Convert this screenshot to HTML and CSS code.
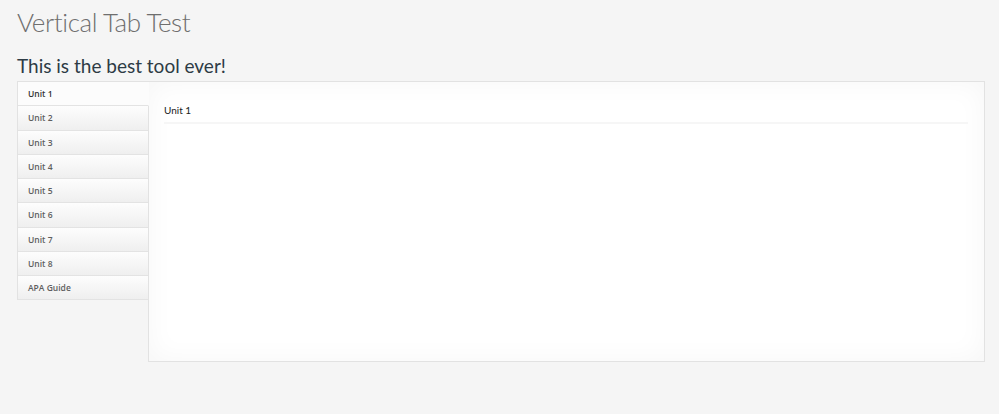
FILE: index.html
```html
<!DOCTYPE html>
<html>
<head>
    <meta charset="utf-8">
    <title>Vertical Tab Test</title>
    <link rel="stylesheet" href="styles.css">
</head>
<body>
    <h1 class="page-title">Vertical Tab Test</h1>
    <h2 class="subtitle">This is the best tool ever!</h2>
    <div class="vtabs">
        <ul class="tab-list">
            <li class="tab active">Unit 1</li>
            <li class="tab">Unit 2</li>
            <li class="tab">Unit 3</li>
            <li class="tab">Unit 4</li>
            <li class="tab">Unit 5</li>
            <li class="tab">Unit 6</li>
            <li class="tab">Unit 7</li>
            <li class="tab">Unit 8</li>
            <li class="tab">APA Guide</li>
        </ul>
        <div class="tab-panel">
            <div class="panel-heading">Unit 1</div>
        </div>
    </div>
</body>
</html>
```

FILE: styles.css
```css
body {
    margin: 0;
    padding: 8px 14px 0 17px;
    background: #f5f5f5;
    font-family: Lato, "Open Sans", sans-serif;
    color: #333;
}
.page-title {
    margin: 0;
    font-size: 26px;
    font-weight: 300;
    letter-spacing: -0.4px;
    color: #6e6e6e;
    line-height: 28px;
}
.subtitle {
    margin: 18px 0 0 0;
    font-size: 19px;
    font-weight: 400;
    line-height: 24px;
    color: #2d3b45;
}
.vtabs {
    display: flex;
    margin-top: 3px;
    height: 281px;
}
.tab-list {
    list-style: none;
    margin: 0;
    padding: 0;
    width: 130px;
    flex: none;
    border-top: 1px solid #e2e2e2;
    border-left: 1px solid #e2e2e2;
    align-self: flex-start;
}
.tab {
    height: 23.25px;
    line-height: 23px;
    padding-left: 10px;
    font-family: "Open Sans", sans-serif;
    font-size: 8.5px;
    font-weight: 600;
    color: #5e5e5e;
    background: linear-gradient(#fdfdfd, #efefef);
    border-bottom: 1px solid #e3e3e3;
    border-right: 1px solid #e2e2e2;
    margin-right: -1px;
    position: relative;
}
.tab.active {
    background: #fcfcfc;
    color: #333;
    border-right-color: transparent;
    z-index: 1;
}
.tab-panel {
    flex: 1;
    border: 1px solid #e2e2e2;
    background: #fff;
    box-shadow: inset 0 0 28px rgba(0,0,0,0.04);
    padding: 22px 16px 0 15px;
}
.panel-heading {
    font-size: 10px;
    color: #222;
    padding-bottom: 6px;
    border-bottom: 2px solid #f6f6f6;
}
```
